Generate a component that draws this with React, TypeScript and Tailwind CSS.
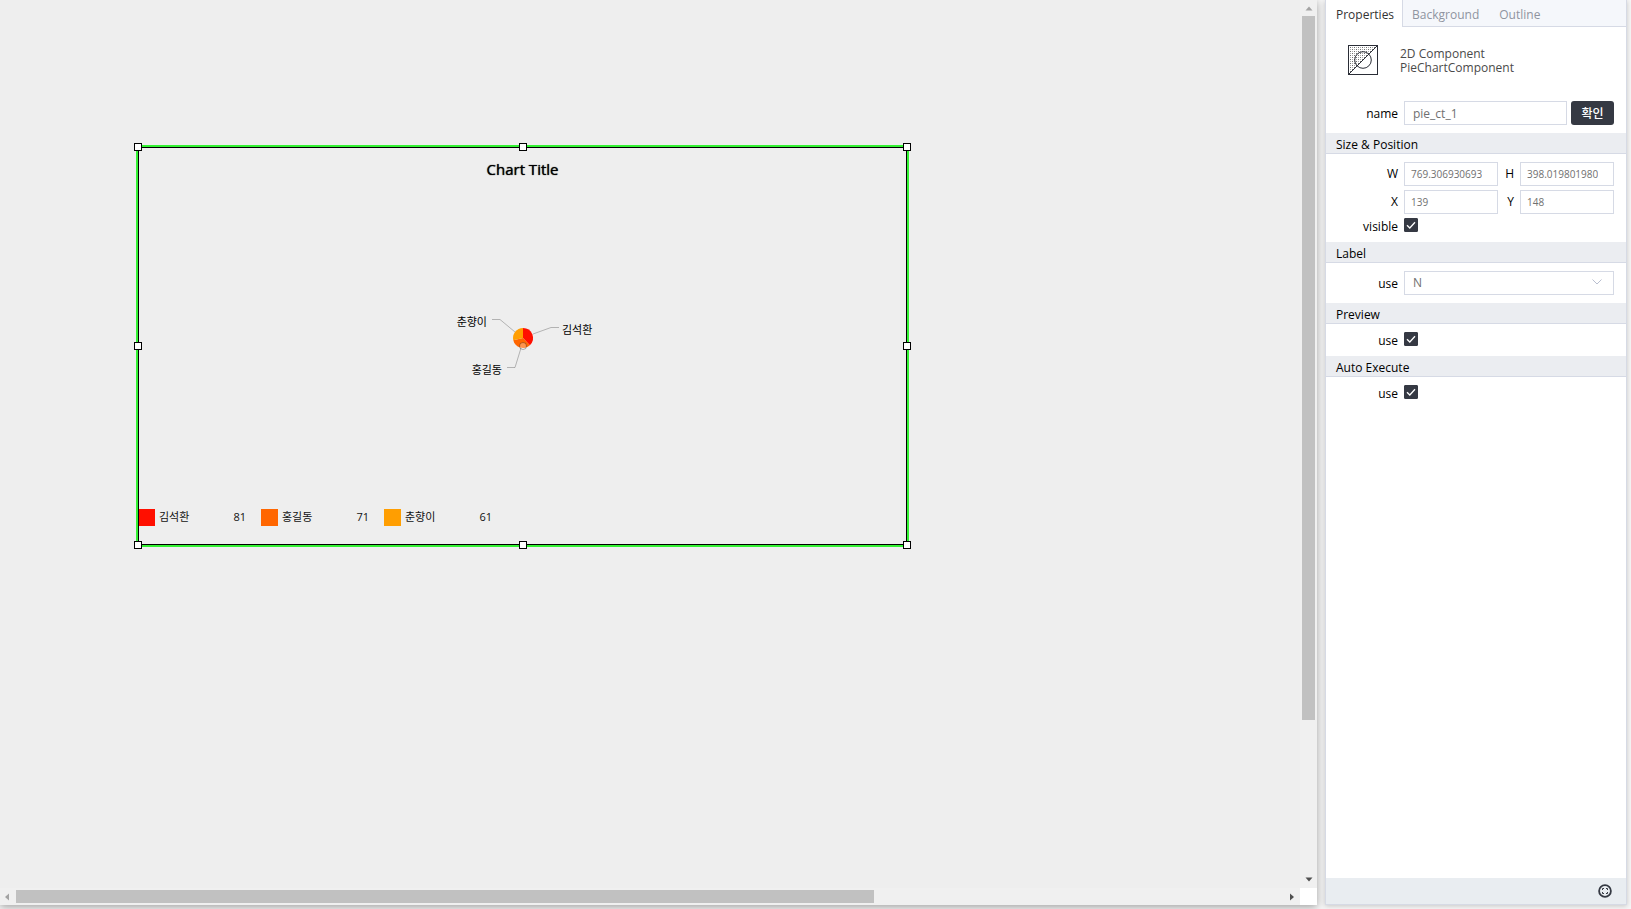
import React, { useId } from "react";

const slices = [
  { name: "김석환", value: 81, color: "#ff0f00" },
  { name: "홍길동", value: 71, color: "#ff6600" },
  { name: "춘향이", value: 61, color: "#ff9e01" },
];

function Handle({ place }: { place: string }) {
  return <span className={`absolute size-2 border border-black bg-white ${place}`} />;
}

function slicePath(cx: number, cy: number, r: number, from: number, to: number) {
  const point = (t: number) =>
    `${cx + r * Math.sin(t * 2 * Math.PI)} ${cy - r * Math.cos(t * 2 * Math.PI)}`;
  return `M${cx} ${cy}L${point(from)}A${r} ${r} 0 0 1 ${point(to)}Z`;
}

function PieChart() {
  const total = slices.reduce((sum, s) => sum + s.value, 0);
  let start = 0;
  return (
    <svg viewBox="0 0 160 80" className="h-20 w-40" fontSize="11">
      {slices.map((s) => {
        const from = start;
        start += s.value / total;
        return <path key={s.name} d={slicePath(80, 38, 10, from, start)} fill={s.color} />;
      })}
      <circle cx="80" cy="46" r="3.5" fill="#fff" fillOpacity="0.3" stroke="#000" strokeOpacity="0.3" />
      <g fill="none" stroke="#000" strokeOpacity="0.25">
        <path d="M90 34L108 27.500H116" />
        <path d="M78 48L72 67.500H64" />
        <path d="M72 32L57 19.500H49" />
      </g>
      <text x="119" y="34">김석환</text>
      <text x="59" y="74" textAnchor="end">홍길동</text>
      <text x="44" y="26" textAnchor="end">춘향이</text>
    </svg>
  );
}

function ChartWidget() {
  return (
    <div className="relative h-[402px] w-[773px] border-2 border-[#33f233]">
      <div className="flex h-full flex-col">
        <h1 className="pt-3 text-center text-[15px] leading-5 [text-shadow:0_0_1px_#000]">Chart Title</h1>
        <div className="flex flex-1 justify-center pt-[121px]">
          <PieChart />
        </div>
        <ul className="flex pb-[19px] text-[11px] text-[#111]">
          {slices.map((s) => (
            <li key={s.name} className="flex w-[123px] items-center gap-1">
              <svg className="size-[17px]" viewBox="0 0 17 17">
                <rect width="17" height="17" fill={s.color} />
              </svg>
              <span className="flex-1">{s.name}</span>
              <span className="pr-[15px]">{s.value}</span>
            </li>
          ))}
        </ul>
      </div>
      <div className="pointer-events-none absolute inset-0 border border-black" />
      <Handle place="-top-1 -left-1" />
      <Handle place="-top-1 left-1/2 -translate-x-1/2" />
      <Handle place="-top-1 -right-1" />
      <Handle place="top-1/2 -left-1 -translate-y-1/2" />
      <Handle place="top-1/2 -right-1 -translate-y-1/2" />
      <Handle place="-bottom-1 -left-1" />
      <Handle place="-bottom-1 left-1/2 -translate-x-1/2" />
      <Handle place="-bottom-1 -right-1" />
    </div>
  );
}

function Arrow({ d, color }: { d: string; color: string }) {
  return (
    <svg viewBox="0 0 16 16" className="size-4 shrink-0">
      <path d={d} fill={color} />
    </svg>
  );
}

function Workspace() {
  return (
    <main className="grid min-w-0 flex-1 grid-cols-[minmax(0,1fr)_17px] grid-rows-[minmax(0,1fr)_17px] bg-[#eee] shadow-[0_2px_8px_rgba(0,0,0,0.35)]">
      <div className="overflow-hidden pt-[145px] pl-[136px]">
        <ChartWidget />
      </div>
      <div className="flex flex-col items-center bg-[#f0f0f0]">
        <Arrow d="M4.500 10.500L8 6.500L11.500 10.500Z" color="#a3a3a3" />
        <div className="flex w-full flex-1 flex-col px-[2px]">
          <div className="h-[82.2%] bg-[#c1c1c1]" />
        </div>
        <Arrow d="M4.500 5.500L8 9.500L11.500 5.500Z" color="#505050" />
      </div>
      <div className="flex items-center bg-[#f0f0f0]">
        <Arrow d="M9 4.500L5 8L9 11.500Z" color="#a3a3a3" />
        <div className="h-full flex-1 py-[2px]">
          <div className="h-full w-[67.7%] bg-[#c1c1c1]" />
        </div>
        <Arrow d="M6 4.500L10 8L6 11.500Z" color="#505050" />
      </div>
      <div className="bg-white" />
    </main>
  );
}

function Section({ title, children }: { title: string; children: React.ReactNode }) {
  return (
    <section>
      <h2 className="h-[21px] border-b border-[#d6dae5] bg-[#ebedf1] pl-[10px] leading-6">{title}</h2>
      <div className="py-2 pr-3">{children}</div>
    </section>
  );
}

const box = "h-6 min-w-0 border border-[#d6dae5] bg-white text-[#707070] outline-none";

function NumberField({ label, value, wide }: { label: string; value: string; wide?: boolean }) {
  const id = useId();
  return (
    <>
      <label htmlFor={id} className={wide ? "w-[72px] shrink-0 text-right" : "flex w-[10px] shrink-0 justify-end"}>
        {label}
      </label>
      <input id={id} defaultValue={value} className={`${box} w-0 flex-1 pr-[15px] pl-[6px] text-[10px]`} />
    </>
  );
}

function CheckRow({ label }: { label: string }) {
  const id = useId();
  return (
    <div className="flex h-4 items-start gap-[6px]">
      <label htmlFor={id} className="w-[72px] text-right leading-[18px]">{label}</label>
      <span className="relative size-[14px]">
        <input
          id={id}
          type="checkbox"
          defaultChecked
          className="peer block size-[14px] appearance-none rounded-[1px] border border-[#353943] checked:bg-[#353943]"
        />
        <svg viewBox="0 0 14 14" className="pointer-events-none absolute inset-0 hidden size-[14px] peer-checked:block">
          <path d="M3 7.200L5.800 10L11 4.300" fill="none" stroke="#fff" strokeWidth="1.300" />
        </svg>
      </span>
    </div>
  );
}

function ComponentIcon() {
  return (
    <svg viewBox="0 0 30 30" className="size-[30px]" fill="none" stroke="#2a2d36">
      <defs>
        <pattern id="dots" width="4" height="4" patternUnits="userSpaceOnUse">
          <g fill="#707070" stroke="none">
            <rect width="1" height="1" />
            <rect x="2" y="2" width="1" height="1" />
            <rect x="2" width="1" height="1" fillOpacity="0.6" />
            <rect y="2" width="1" height="1" fillOpacity="0.6" />
          </g>
        </pattern>
      </defs>
      <path d="M1 29V1H29Z" fill="url(#dots)" stroke="none" />
      <circle cx="15" cy="15" r="8.300" />
      <path d="M1 29L29 1" />
      <rect x="0.500" y="0.500" width="29" height="29" />
    </svg>
  );
}

function PropertiesPanel() {
  return (
    <aside className="flex w-[302px] shrink-0 flex-col border border-t-0 border-[#d6dae5] bg-white shadow-[0_1px_5px_rgba(0,0,0,0.2)]">
      <nav className="flex h-[27px] bg-[#f5f7fb] text-[#8f94a0]">
        <button type="button" className="border-r border-[#d6dae5] bg-white pt-0.5 pr-2 pl-[10px] text-[#333]">Properties</button>
        <div className="flex flex-1 gap-5 border-b border-[#d6dae5] pt-[3px] pl-[9px]">
          <button type="button">Background</button>
          <button type="button">Outline</button>
        </div>
      </nav>
      <div className="flex items-center gap-[22px] pt-[18px] pl-[22px] leading-[14px] text-[#4a4a4a]">
        <ComponentIcon />
        <p className="pt-0.5">
          2D Component
          <br />
          PieChartComponent
        </p>
      </div>
      <div className="flex items-center pt-[26px] pr-3 pb-2">
        <label htmlFor="component-name" className="w-[72px] shrink-0 pt-0.5 text-right">name</label>
        <input id="component-name" defaultValue="pie_ct_1" className={`${box} ml-[6px] flex-1 px-2`} />
        <button type="button" className="ml-1 h-6 w-[43px] rounded-[3px] bg-[#353943] pt-0.5 font-medium text-white">확인</button>
      </div>
      <Section title="Size & Position">
        <div className="flex flex-col gap-1">
          <div className="flex items-center gap-[6px]">
            <NumberField label="W" value="769.3069306930693" wide />
            <NumberField label="H" value="398.01980198019805" />
          </div>
          <div className="flex items-center gap-[6px]">
            <NumberField label="X" value="139" wide />
            <NumberField label="Y" value="148" />
          </div>
          <CheckRow label="visible" />
        </div>
      </Section>
      <Section title="Label">
        <div className="flex items-center gap-[6px]">
          <label htmlFor="label-use" className="w-[72px] shrink-0 pt-0.5 text-right">use</label>
          <span className="relative flex flex-1">
            <select id="label-use" defaultValue="N" className={`${box} flex-1 appearance-none px-2`}>
              <option>N</option>
              <option>Y</option>
            </select>
            <svg viewBox="0 0 10 6" className="pointer-events-none absolute top-2 right-3 h-[6px] w-[10px]">
              <path d="M0.500 0.500L5 5L9.500 0.500" fill="none" stroke="#b9bfd0" />
            </svg>
          </span>
        </div>
      </Section>
      <Section title="Preview">
        <CheckRow label="use" />
      </Section>
      <Section title="Auto Execute">
        <CheckRow label="use" />
      </Section>
      <footer className="mt-auto flex h-[26px] items-center justify-end bg-[#e9edf1] pr-[14px]">
        <button type="button" aria-label="Fit to screen">
          <svg viewBox="0 0 14 14" className="size-[14px]" fill="none" stroke="#353943">
            <circle cx="7" cy="7" r="5.900" strokeWidth="1.800" />
            <path d="M4.500 6V4.500H6M8 4.500H9.500V6M9.500 8V9.500H8M6 9.500H4.500V8" />
          </svg>
        </button>
      </footer>
    </aside>
  );
}

export default function App() {
  return (
    <div className="flex h-screen gap-2 bg-[#f6f6f6] pr-1 pb-1 font-['Open_Sans','Noto_Sans_CJK_KR',sans-serif] text-xs text-black">
      <Workspace />
      <PropertiesPanel />
    </div>
  );
}
